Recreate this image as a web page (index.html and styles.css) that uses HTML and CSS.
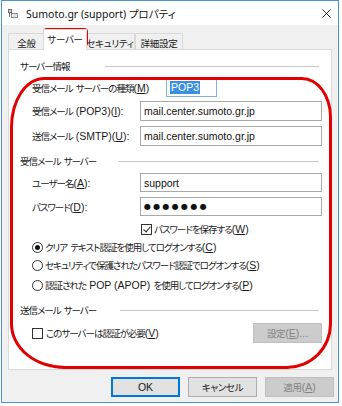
FILE: index.html
```html
<!DOCTYPE html>
<html lang="ja">
<head>
    <meta charset="UTF-8">
    <title>Sumoto.gr (support) プロパティ</title>
    <link rel="stylesheet" href="styles.css">
</head>
<body>
    <div class="window">
        <div class="titlebar">
            <svg class="app-icon" viewBox="0 0 10 9">
                <rect x="0" y="0" width="4" height="4" fill="#6b6b6b"/>
                <rect x="1" y="1" width="2" height="2" fill="#d8d8d8"/>
                <rect x="3" y="4" width="7" height="5" fill="#8a8a8a"/>
                <rect x="4" y="5" width="5" height="3" fill="#e6e6e6"/>
                <rect x="1" y="4" width="1" height="4" fill="#6b6b6b"/>
            </svg>
            <span class="title">Sumoto.gr (support) プロパティ</span>
            <svg class="close" viewBox="0 0 10 10">
                <path d="M0.5 0.5 L9.5 9.5 M9.5 0.5 L0.5 9.5" stroke="#111" stroke-width="1" fill="none"/>
            </svg>
        </div>

        <div class="tabs">
            <div class="tab tab-general">全般</div>
            <div class="tab tab-server active">サーバー</div>
            <div class="tab tab-security">セキュリティ</div>
            <div class="tab tab-detail">詳細設定</div>
        </div>

        <div class="panel">
            <div class="group-head head-info"><span class="head-text">サーバー情報</span><i class="rule"></i></div>

            <div class="row row-type">
                <span class="label label-type">受信メール サーバーの種類<span class="en">(<u>M</u>)</span></span>
                <span class="type-box"><span class="selected">POP3</span></span>
            </div>
            <div class="row row-field row-in">
                <span class="label">受信メール <span class="en">(POP3)(<u>I</u>):</span></span>
                <span class="field">mail.center.sumoto.gr.jp</span>
            </div>
            <div class="row row-field row-out">
                <span class="label">送信メール <span class="en">(SMTP)(<u>U</u>):</span></span>
                <span class="field">mail.center.sumoto.gr.jp</span>
            </div>

            <div class="group-head head-in"><span class="head-text">受信メール サーバー</span><i class="rule"></i></div>

            <div class="row row-field row-user">
                <span class="label">ユーザー名<span class="en">(<u>A</u>):</span></span>
                <span class="field">support</span>
            </div>
            <div class="row row-field row-pass">
                <span class="label">パスワード<span class="en">(<u>D</u>):</span></span>
                <span class="field dots">●●●●●●●</span>
            </div>
            <div class="row row-save">
                <span class="checkbox checked"></span>
                <span>パスワードを保存する<span class="en">(<u>W</u>)</span></span>
            </div>

            <div class="row row-radio radio-1">
                <span class="radio on"></span>
                <span>クリア テキスト認証を使用してログオンする<span class="en">(<u>C</u>)</span></span>
            </div>
            <div class="row row-radio radio-2">
                <span class="radio"></span>
                <span>セキュリティで保護されたパスワード認証でログオンする<span class="en">(<u>S</u>)</span></span>
            </div>
            <div class="row row-radio radio-3">
                <span class="radio"></span>
                <span>認証された <span class="en">POP (APOP)</span> を使用してログオンする<span class="en">(<u>P</u>)</span></span>
            </div>

            <div class="group-head head-out"><span class="head-text">送信メール サーバー</span><i class="rule"></i></div>

            <div class="row row-auth">
                <span class="checkbox"></span>
                <span class="auth-text">このサーバーは認証が必要<span class="en">(<u>V</u>)</span></span>
                <span class="button disabled settings">設定<span class="en">(<u>E</u>)...</span></span>
            </div>
        </div>

        <div class="buttons">
            <span class="button default"><span class="en">OK</span></span>
            <span class="button">キャンセル</span>
            <span class="button disabled">適用<span class="en">(<u>A</u>)</span></span>
        </div>

        <!-- red marks drawn over the dialog -->
        <div class="mark mark-tab"></div>
        <div class="mark mark-panel"></div>
    </div>
</body>
</html>
```

FILE: styles.css
```css
body {
    margin: 0;
    background: #fff;
    color: #1a1a1a;
    font-family: "Noto Sans CJK JP", sans-serif;
    font-size: 9.5px;
    letter-spacing: -1px;
    word-spacing: 2px;
    font-feature-settings: "palt";
}
.en {
    font-family: "Liberation Sans", sans-serif;
    font-size: 10.5px;
    letter-spacing: 0;
    word-spacing: 0;
}
.window {
    position: relative;
    box-sizing: border-box;
    width: 338px;
    height: 403px;
    margin-left: 1px;
    border: 1px solid #4a94d2;
    background: #f0f0f0;
}
.titlebar {
    display: flex;
    align-items: center;
    height: 24px;
    padding: 0 7px 0 6px;
    background: #fff;
}
.app-icon {
    width: 10px;
    height: 9px;
    margin-right: 8px;
}
.title {
    flex: 1;
    font-family: "Noto Sans", "Noto Sans CJK JP", sans-serif;
    font-size: 10.5px;
    letter-spacing: 0;
    word-spacing: 0;
    color: #111;
}
.close {
    width: 9px;
    height: 9px;
}

/* tabs */
.tabs {
    display: flex;
    align-items: flex-end;
    height: 24px;
    padding-left: 6px;
}
.tab {
    box-sizing: border-box;
    height: 16px;
    padding-top: 2px;
    border: 1px solid #d9d9d9;
    border-bottom: none;
    background: #f0f0f0;
    text-align: center;
    line-height: 14px;
    letter-spacing: -0.3px;
    white-space: nowrap;
}
.tab-general { width: 37px; }
.tab-server { width: 44px; }
.tab-security { width: 50px; }
.tab-detail { width: 48px; }
.tab.active {
    position: relative;
    z-index: 1;
    height: 21px;
    margin: 0 -2px -1px -2px;
    padding-top: 2px;
    background: #fff;
}

/* panel */
.panel {
    box-sizing: border-box;
    height: 321px;
    margin-left: 6px;
    width: 324px;
    padding: 9px 9px 0 11px;
    border: 1px solid #d9d9d9;
    background: #fff;
}
.group-head {
    display: flex;
    align-items: center;
    height: 14px;
    white-space: nowrap;
}
.rule {
    flex: 1;
    height: 1px;
    margin-right: 3px;
    background: #c8c8c8;
}
.head-info .head-text { width: 85px; }
.head-in .head-text { width: 98px; }
.head-out .head-text { width: 100px; }
.head-in { margin-top: 8px; }
.head-out { margin-top: 11px; }

.row {
    display: flex;
    align-items: center;
    padding-left: 12px;
    white-space: nowrap;
}
.label {
    width: 108px;
    flex-shrink: 0;
}
.label-type {
    width: 134px;
}
.row-type {
    height: 19px;
    margin-top: 5px;
}
.type-box {
    box-sizing: border-box;
    width: 51px;
    height: 19px;
    padding: 2px 0 0 3px;
    border: 1px solid #7fb1e3;
    font-family: "Liberation Sans", sans-serif;
    font-size: 10.5px;
    letter-spacing: 0;
}
.selected {
    display: inline-block;
    padding: 0 1px;
    line-height: 13px;
    background: #3b8fe2;
    color: #fff;
}
.row-field {
    height: 20px;
}
.row-in { margin-top: 4px; }
.row-out { margin-top: 5px; }
.row-user, .row-pass {
    height: 19px;
    margin-top: 5px;
}
.field {
    box-sizing: border-box;
    flex: 1;
    height: 100%;
    padding-left: 3px;
    border: 1px solid #a9a9a9;
    font-family: "Liberation Sans", sans-serif;
    font-size: 10.5px;
    letter-spacing: 0;
    line-height: 18px;
    color: #111;
}
.dots {
    font-family: "DejaVu Sans", sans-serif;
    font-size: 8px;
    letter-spacing: 2.3px;
    line-height: 17px;
}
.row-save {
    height: 14px;
    margin-top: 6px;
    padding-left: 121px;
}
.row-radio {
    height: 14px;
    margin-top: 4px;
}
.radio-3 { margin-top: 6px; }

.checkbox {
    box-sizing: border-box;
    position: relative;
    width: 11px;
    height: 11px;
    margin-right: 2px;
    border: 1px solid #333;
    background: #fff;
}
.checkbox.checked::after {
    content: "";
    position: absolute;
    left: 3px;
    top: 0;
    width: 3px;
    height: 6px;
    border: solid #222;
    border-width: 0 1px 1px 0;
    transform: rotate(40deg);
}
.radio {
    box-sizing: border-box;
    position: relative;
    width: 11px;
    height: 11px;
    margin-right: 2px;
    border: 1px solid #333;
    border-radius: 50%;
    background: #fff;
}
.radio.on::after {
    content: "";
    position: absolute;
    left: 2px;
    top: 2px;
    width: 5px;
    height: 5px;
    border-radius: 50%;
    background: #111;
}

.row-auth {
    height: 20px;
    margin-top: 6px;
}
.auth-text {
    flex: 1;
    margin-left: 1px;
}
.settings {
    width: 75px;
}

/* buttons */
.button {
    box-sizing: border-box;
    display: inline-flex;
    align-items: center;
    justify-content: center;
    width: 69px;
    height: 20px;
    border: 1px solid #adadad;
    background: #e1e1e1;
    letter-spacing: -0.3px;
}
.button.default {
    border: 1px solid #0078d7;
    box-shadow: inset 0 0 0 1px #0078d7;
}
.button.disabled {
    border-color: #bfbfbf;
    background: #cccccc;
    color: #838383;
}
.buttons {
    display: flex;
    justify-content: flex-end;
    gap: 8px;
    margin-top: 7px;
    padding-right: 4px;
}

/* annotation marks */
.mark {
    position: absolute;
    box-sizing: border-box;
    border: 3px solid #e20000;
}
.mark-tab {
    left: 41px;
    top: 27px;
    width: 45px;
    height: 19px;
    border-width: 2.5px;
    border-radius: 4px;
}
.mark-panel {
    left: 8px;
    top: 76px;
    width: 322px;
    height: 292px;
    border-radius: 34px 30px 45px 55px / 50px 40px 45px 45px;
}
```
